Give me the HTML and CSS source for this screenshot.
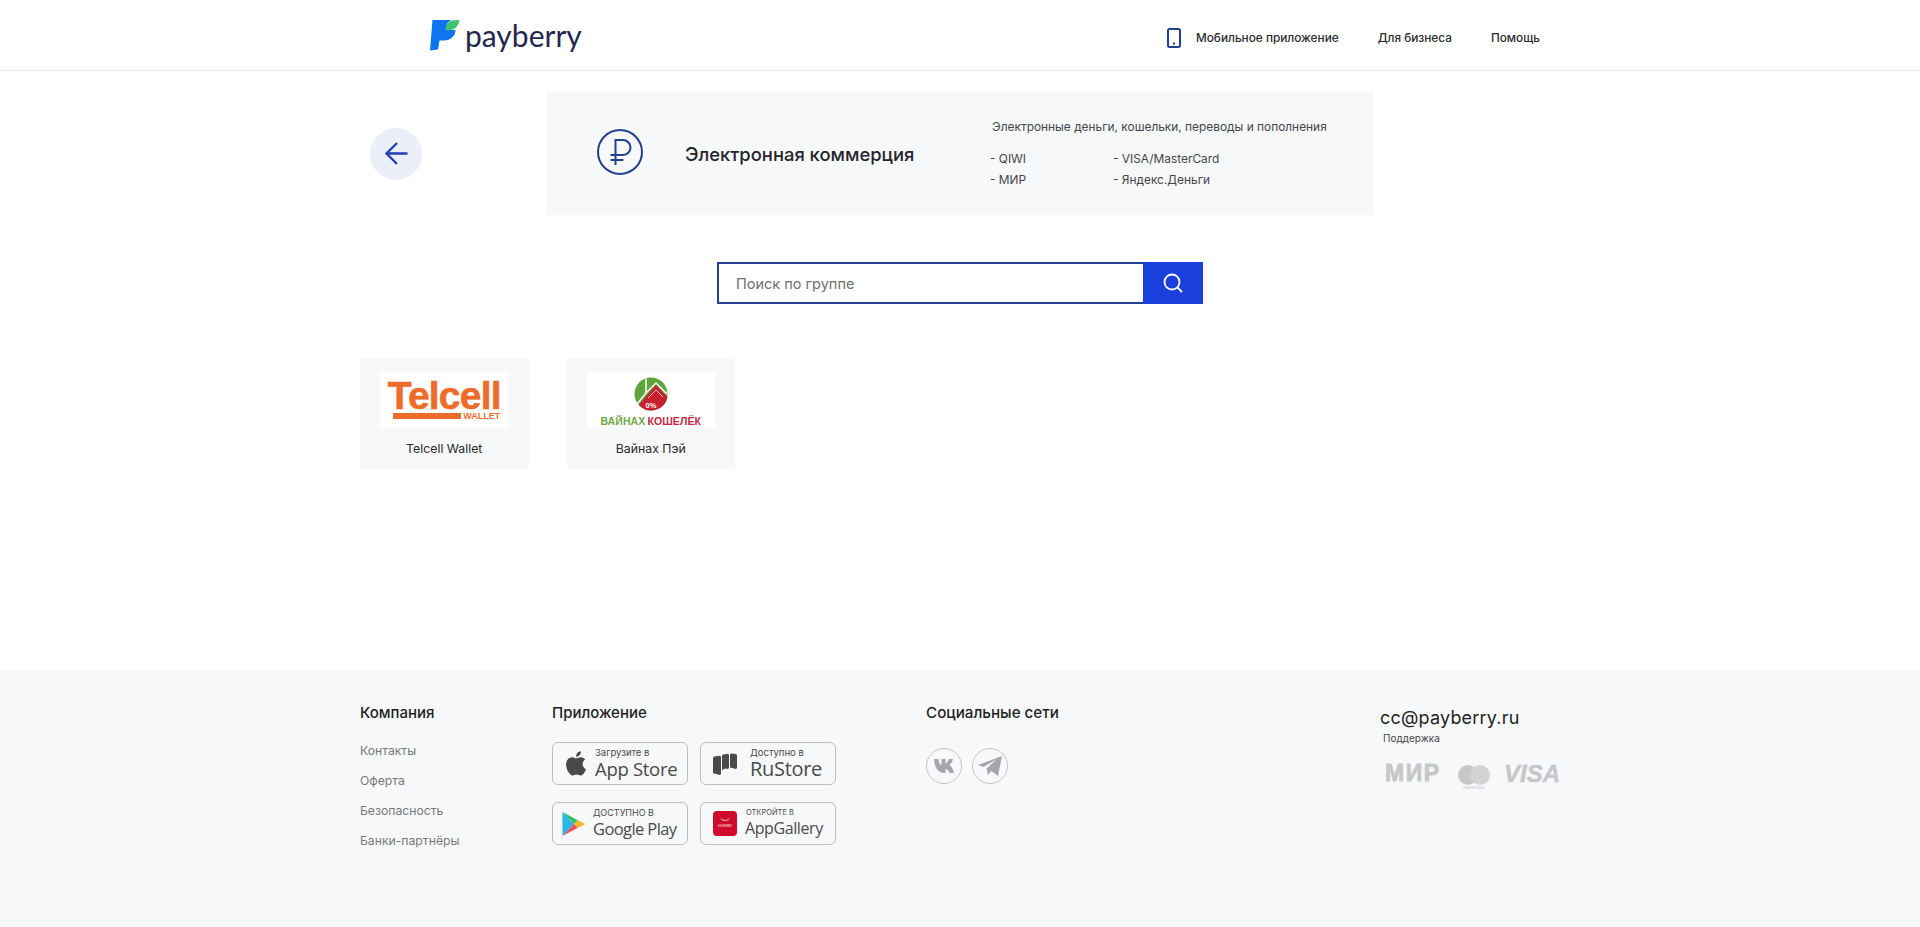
FILE: index.html
```html
<!DOCTYPE html>
<html lang="ru">
<head>
<meta charset="utf-8">
<title>Payberry</title>
<link rel="stylesheet" href="styles.css">
</head>
<body>
<header class="header">
  <a class="logo" href="#">
    <svg class="logo-mark" width="30" height="32" viewBox="0 0 30 32"><path fill="#0f74f0" d="M2.500 1H21l-3.500 3c-1.500 3-1.500 7 2.500 7h5.500c-.2 6-5 10.500-11.500 10.500H9.500L8 30.500 0 31.500z"/><path fill="#3fc46e" d="M15.500 10.500C16 4.500 19 1.500 24 1.200L29.500 1C28.500 6.500 25.500 10.500 20 11l-4.500.2z"/></svg>
    <span class="logo-text">payberry</span>
  </a>
  <nav class="nav">
    <a class="nav-link nav-app" href="#">
      <svg width="14" height="20" viewBox="0 0 14 20"><rect x="1" y="1" width="12" height="18" rx="1.500" fill="none" stroke="#23408f" stroke-width="2"/><rect x="6" y="14.500" width="2" height="2" fill="#23408f"/></svg>
      Мобильное приложение
    </a>
    <a class="nav-link" href="#">Для бизнеса</a>
    <a class="nav-link" href="#">Помощь</a>
  </nav>
</header>

<main class="main">
  <section class="top">
    <a class="back" href="#">
      <svg width="24" height="25" viewBox="0 0 24 25"><path d="M23.500 12.500H2.500M13 2 2.500 12.500 13 23" fill="none" stroke="#2140b5" stroke-width="2.400"/></svg>
    </a>
    <div class="banner">
      <svg class="ruble" width="46" height="46" viewBox="0 0 46 46"><circle cx="23" cy="23" r="22" fill="none" stroke="#23408f" stroke-width="2"/><path d="M18.500 36V11h7.500a7.500 7.500 0 0 1 0 15H13.500M13.500 31h13" fill="none" stroke="#23408f" stroke-width="2"/></svg>
      <h1 class="banner-title">Электронная коммерция</h1>
      <div class="banner-info">
        <p class="banner-desc">Электронные деньги, кошельки, переводы и пополнения</p>
        <ul class="banner-list">
          <li>- QIWI</li>
          <li>- VISA/MasterCard</li>
          <li>- МИР</li>
          <li>- Яндекс.Деньги</li>
        </ul>
      </div>
    </div>
  </section>

  <form class="search">
    <input class="search-input" type="text" placeholder="Поиск по группе">
    <button class="search-btn" type="button" aria-label="Поиск">
      <svg width="20" height="20" viewBox="0 0 20 20"><circle cx="9" cy="9" r="7.500" fill="none" stroke="#fff" stroke-width="1.800"/><path d="m14.500 14.500 4.500 4.500" stroke="#fff" stroke-width="1.800"/></svg>
    </button>
  </form>

  <section class="cards">
    <a class="card" href="#">
      <div class="card-img telcell">
        <span class="telcell-name">Telcell</span>
        <div class="telcell-sub"><i class="telcell-bar"></i><span>WALLET</span></div>
      </div>
      <span class="card-name">Telcell Wallet</span>
    </a>
    <a class="card" href="#">
      <div class="card-img vainah">
        <svg width="34" height="34" viewBox="0 0 34 34"><circle cx="17" cy="17" r="16.500" fill="#5ea63c"/><path d="M5 28 14 17l8-9 11.500 12A16.500 16.500 0 0 1 5 28z" fill="#c8202f"/><path d="M12 1.500V16L22 6l11 11M3.500 26.500 12 16" fill="none" stroke="#fff" stroke-width="1.500"/><path d="M14 21l8-8 7 7" fill="none" stroke="#f3c9cc" stroke-width="1"/><text class="vainah-pct" x="17" y="30.500">0%</text></svg>
        <div class="vainah-name"><span class="v-green">ВАЙНАХ</span><span class="v-red">КОШЕЛЁК</span></div>
      </div>
      <span class="card-name">Вайнах Пэй</span>
    </a>
  </section>
</main>

<footer class="footer">
  <div class="footer-inner">
    <div class="f-company">
      <h3 class="f-title">Компания</h3>
      <ul class="f-links">
        <li>Контакты</li>
        <li>Оферта</li>
        <li>Безопасность</li>
        <li>Банки-партнёры</li>
      </ul>
    </div>
    <div class="f-apps">
      <h3 class="f-title">Приложение</h3>
      <div class="stores">
        <a class="store" href="#">
          <svg class="store-icon" width="22" height="26" viewBox="3 1.500 17 21.500"><path fill="#4a4a4a" d="M18 13.800c0-2.500 2-3.700 2.100-3.800-1.200-1.700-3-1.900-3.600-1.900-1.500-.2-3 .9-3.800.9s-2-.9-3.300-.9C7.700 8.100 6.100 9.100 5.200 10.600c-1.800 3.100-.5 7.700 1.300 10.200.9 1.200 1.900 2.600 3.200 2.500 1.300 0 1.800-.8 3.300-.8s2 .8 3.300.8c1.400 0 2.300-1.200 3.100-2.500 1-1.400 1.400-2.800 1.400-2.900-.1 0-2.800-1-2.800-4.100zM15.500 6.400c.7-.9 1.200-2 1-3.200-1 0-2.200.7-2.900 1.500-.6.700-1.200 1.900-1 3 1.100.1 2.200-.5 2.900-1.300z" transform="translate(-1 -1.500)"/></svg>
          <span class="store-text"><small class="store-small">Загрузите в</small><b class="store-big">App Store</b></span>
        </a>
        <a class="store store-ru" href="#">
          <svg class="store-icon" width="24" height="22" viewBox="0 0 24 22"><path fill="#4a4a4a" d="M0 4.500 1 3.500l6-.8 1 1V21l-1 1-6-1.500-1-1z"/><path fill="#4a4a4a" d="M9 2.500l1-1 5-.7 1 1V15l-1 1-2.500-.4L9 17z"/><path fill="#4a4a4a" d="M17 1.500l1-1 5 .5 1 1v13l-1 1-6-1.500z"/></svg>
          <span class="store-text"><small class="store-small">Доступно в</small><b class="store-big store-big-ru">RuStore</b></span>
        </a>
        <a class="store store-g" href="#">
          <svg class="store-icon" width="24" height="26" viewBox="0 0 24 27"><path fill="#2cb5e8" d="M0 1v25l12-12.500z"/><path fill="#34c06c" d="M0 1l16 8.500-4 4z"/><path fill="#e8505b" d="M0 26l16-8.500-4-4z"/><path fill="#f7b52c" d="M16 9.500l8 4-8 4-4-4z"/></svg>
          <span class="store-text"><small class="store-small store-upper">ДОСТУПНО В</small><b class="store-big store-big-g">Google Play</b></span>
        </a>
        <a class="store" href="#">
          <span class="huawei"><svg width="10" height="4" viewBox="0 0 10 4"><path d="M1 .5c1 2.500 7 2.500 8 0" fill="none" stroke="#fff" stroke-width=".8"/></svg><span>HUAWEI</span></span>
          <span class="store-text"><small class="store-small store-tiny">ОТКРОЙТЕ В</small><b class="store-big store-big-a">AppGallery</b></span>
        </a>
      </div>
    </div>
    <div class="f-social">
      <h3 class="f-title f-title-wide">Социальные сети</h3>
      <div class="socials">
        <a class="social" href="#"><svg width="24" height="14" viewBox="0 0 24 14"><path fill="#a5a7aa" d="M0 0h4.500c.3 4 1.800 6 3 6.500V0h4v4.300c1.300-.2 2.500-1.800 3.300-4.300H19c-.7 3-2.300 5-3.600 6 1.500.8 3.500 3 4.600 8h-4.500c-1-2.800-2.500-4-4-4.300V14H11C5 14 .6 10 0 0z" transform="translate(2 0)"/></svg></a>
        <a class="social" href="#"><svg width="24" height="22" viewBox="0 0 24 22"><path fill="#a5a7aa" d="M24 1 20 21l-6.500-5-3.500 4-1.500-6.500L19 4 5.500 12 0 10z"/></svg></a>
      </div>
    </div>
    <div class="f-contact">
      <div class="f-email">cc@payberry.ru</div>
      <div class="f-support">Поддержка</div>
      <div class="pay">
        <span class="pay-mir">МИР</span>
        <span class="pay-mc"><span class="pay-circles"><i></i><i></i></span><small class="pay-mc-text">mastercard</small></span>
        <span class="pay-visa">VISA</span>
      </div>
    </div>
  </div>
</footer>
</body>
</html>
```
FILE: styles.css
```css
* { box-sizing: border-box; }
html, body { margin: 0; padding: 0; }
body {
  font-family: "Inter", "Noto Sans", sans-serif;
  color: #1f2023;
  background: #fff;
  width: 1920px;
  height: 927px;
  overflow: hidden;
  display: flex;
  flex-direction: column;
}
a { color: inherit; text-decoration: none; }
ul { list-style: none; margin: 0; padding: 0; }
p, h1, h3 { margin: 0; font-weight: 500; }

.header {
  height: 71px;
  flex: none;
  border-bottom: 1px solid #e7e8ea;
  display: flex;
  align-items: center;
  justify-content: space-between;
  padding: 0 380px 0 430px;
}
.logo { display: flex; align-items: center; gap: 5px; }
.logo-mark { display: block; margin-top: -1px; }
.logo-text {
  font-family: "Lato", sans-serif;
  font-size: 30px;
  color: #25274f;
  line-height: 32px;
}
.nav { display: flex; align-items: center; gap: 39px; padding-top: 5px; }
.nav-link { font-size: 11.800px; font-weight: 500; color: #2a2b2e; line-height: 16px; }
.nav-app { display: flex; align-items: center; gap: 15px; }

.main { flex: 1; padding: 21px 360px 0; }
.top { display: flex; align-items: center; height: 123px; }
.back {
  width: 52px;
  height: 52px;
  border-radius: 50%;
  background: #eceff7;
  display: flex;
  align-items: center;
  justify-content: center;
  margin: 0 124px 0 10px;
  flex: none;
}
.banner {
  width: 828px;
  height: 123px;
  background: #f7f8fa;
  display: flex;
  align-items: center;
  padding-left: 51px;
}
.ruble { flex: none; margin-top: -4px; }
.banner-title { font-size: 18.400px; font-weight: 500; margin: 0 73px 0 42px; white-space: nowrap; width: 232px; color: #24252a; }
.banner-info { font-size: 11.900px; color: #45464a; margin-top: -1px; }
.banner-desc { font-weight: 400; margin: 0 0 16px 2px; white-space: nowrap; line-height: 16px; }
.banner-list { display: grid; grid-template-columns: 123px auto; row-gap: 5px; line-height: 16px; }

.search { display: flex; width: 486px; height: 42px; margin: 47px 0 0 357px; }
.search-input {
  flex: 1;
  min-width: 0;
  border: 2px solid #23408f;
  border-right: 0;
  padding: 0 17px;
  font: 400 14.500px "Inter", sans-serif;
  color: #333;
  outline: none;
}
.search-input::placeholder { color: #6f7072; opacity: 1; }
.search-btn {
  width: 60px;
  border: 0;
  padding: 0;
  background: #1a3fdc;
  display: flex;
  align-items: center;
  justify-content: center;
}

.cards { display: flex; gap: 38px; margin-top: 55px; }
.card {
  width: 168.500px;
  height: 110px;
  background: #f7f8fa;
  display: flex;
  flex-direction: column;
  align-items: center;
  padding-top: 13px;
}
.card-img {
  width: 128px;
  height: 56px;
  background: #fff;
  display: flex;
  flex-direction: column;
  align-items: center;
}
.card-name { font-size: 12.300px; font-weight: 400; margin-top: 13px; line-height: 16px; color: #27282b; }
.telcell { padding-top: 9px; color: #ee6c2b; font-family: "Liberation Sans", sans-serif; }
.telcell-name { display: block; font-size: 39px; font-weight: 700; line-height: 30px; letter-spacing: -.8px; -webkit-text-stroke: .6px #ee6c2b; }
.telcell-sub { display: flex; align-items: center; gap: 2px; width: 107px; margin: 1px 0 0 5px; }
.telcell-bar { flex: 1; height: 6px; background: #ee6c2b; }
.telcell-sub span { font-size: 9px; font-weight: 700; line-height: 8px; }
.vainah { padding-top: 5px; }
.vainah svg { display: block; }
.vainah-pct { font: 700 7.500px "Liberation Sans", sans-serif; fill: #fff; text-anchor: middle; }
.vainah-name { font: 700 10.500px/12px "Liberation Sans", sans-serif; display: flex; gap: 2px; margin-top: 4px; letter-spacing: .1px; }
.v-green { color: #6fa944; }
.v-red { color: #c5283d; }

.footer { height: 257px; flex: none; background: #f7f8fa; padding: 34px 360px 0; }
.footer-inner { display: flex; }
.f-title { font-size: 15px; font-weight: 500; line-height: 18px; color: #1e1f22; white-space: nowrap; }
.f-title-wide { font-size: 15.200px; }
.f-company { width: 192px; flex: none; }
.f-links { margin-top: 21px; display: flex; flex-direction: column; gap: 14px; font-size: 12.200px; color: #77787b; line-height: 16px; }
.f-apps { width: 374px; flex: none; }
.stores { display: grid; grid-template-columns: 136px 136px; gap: 17px 12px; margin-top: 20px; }
.store {
  height: 43px;
  border: 1px solid #bdbec1;
  border-radius: 6px;
  display: flex;
  align-items: center;
  padding-left: 12px;
  gap: 8px;
  color: #4a4a4a;
}
.store-ru { gap: 13px; }
.store-g { padding-left: 9px; gap: 7px; }
.store-icon { display: block; flex: none; }
.store-text { display: flex; flex-direction: column; }
.store-small { font-size: 9.500px; line-height: 10px; white-space: nowrap; }
.store-upper { font-size: 9px; }
.store-tiny { font-size: 7.500px; margin-left: 1px; }
.store-big { font: 500 18.500px/21px "Open Sans", sans-serif; letter-spacing: -.3px; white-space: nowrap; }
.store-big-ru { font-size: 20px; }
.store-big-g { font-size: 16.500px; letter-spacing: -.6px; }
.store-big-a { font-size: 16px; letter-spacing: -.4px; }
.huawei {
  width: 24px;
  height: 25px;
  border-radius: 4px;
  background: #cf0a2c;
  color: #fff;
  font-size: 3.500px;
  line-height: 5px;
  display: flex;
  flex-direction: column;
  align-items: center;
  justify-content: center;
  gap: 2px;
  flex: none;
}
.huawei svg { display: block; }
.f-social { width: 454px; flex: none; }
.socials { display: flex; gap: 10px; margin-top: 26px; }
.social {
  width: 36px;
  height: 36px;
  border-radius: 50%;
  border: 1px solid #c3c4c7;
  display: flex;
  align-items: center;
  justify-content: center;
}
.f-contact { margin-top: 2px; }
.f-email { font-size: 18px; line-height: 24px; font-weight: 400; color: #1e1f22; white-space: nowrap; letter-spacing: .2px; }
.f-support { font-size: 10px; line-height: 14px; color: #45464a; margin: 1px 0 0 3px; }
.pay { display: flex; align-items: flex-start; margin: 20px 0 0 5px; color: #c6c7c9; }
.pay-mir { font: 700 23px/17px "Liberation Sans", sans-serif; -webkit-text-stroke: .8px #c6c7c9; letter-spacing: 1.500px; width: 56px; margin-right: 17px; white-space: nowrap; }
.pay-mc { display: flex; flex-direction: column; align-items: center; width: 32px; margin-right: 14px; }
.pay-circles { display: flex; }
.pay-circles i { width: 20px; height: 20px; border-radius: 50%; background: #c6c7c9; }
.pay-circles i + i { margin-left: -8px; background: #d2d3d5; }
.pay-mc-text { font-size: 4px; line-height: 5px; white-space: nowrap; }
.pay-visa { font: italic 700 24px/17px "Liberation Sans", sans-serif; -webkit-text-stroke: .5px #c6c7c9; }
```
